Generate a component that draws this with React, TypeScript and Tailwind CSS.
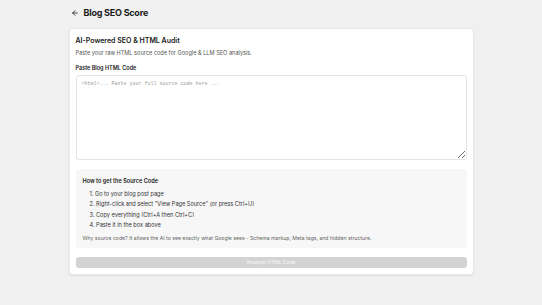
import React from "react";

export default function App() {
  const font = { fontFamily: "Inter, 'Noto Sans', sans-serif" };
  return (
    <div className="min-h-[305px] w-full bg-[#f0f0f0]" style={font}>
      <div className="mx-auto w-[405px]">
        <div className="flex h-[25px] items-center gap-[5px] pl-[2px] pt-[1px]">
          <svg width="8" height="8" viewBox="0 0 24 24" fill="none" stroke="#222" strokeWidth="2.5" strokeLinecap="round" strokeLinejoin="round">
            <path d="M19 12H5" />
            <path d="M12 19l-7-7 7-7" />
          </svg>
          <h1 className="text-[9px] font-bold tracking-tight text-[#1a1a1a]">Blog SEO Score</h1>
        </div>
        <div className="mt-[3px] rounded-[4px] border border-[#e8e8e8] bg-white px-[6px] pb-[6px] pt-[7px] shadow-[0_1px_2px_rgba(0,0,0,0.08)]">
          <h2 className="text-[7px] font-semibold leading-[10px] text-[#1a1a1a]">AI-Powered SEO &amp; HTML Audit</h2>
          <p className="mt-[2px] text-[5.6px] leading-[10px] text-[#555]">Paste your raw HTML source code for Google &amp; LLM SEO analysis.</p>
          <label className="mt-[5px] block text-[5.5px] font-semibold leading-[10px] text-[#1a1a1a]">Paste Blog HTML Code</label>
          <textarea
            className="mt-[2px] block h-[85px] w-full resize-y rounded-[3px] border border-[#e4e4e4] bg-white px-[5px] py-[4px] text-[5px] leading-[8px] text-[#333] outline-none placeholder:text-[#9a9a9a]"
            style={{ fontFamily: "'Liberation Mono', 'DejaVu Sans Mono', monospace" }}
            placeholder="<html>... Paste your full source code here ..."
          />
          <div className="mt-[9px] rounded-[4px] bg-[#f7f7f7] px-[7px] pb-[6px] pt-[7px]">
            <h3 className="text-[5.6px] font-semibold leading-[10px] text-[#1a1a1a]">How to get the Source Code</h3>
            <ol className="mt-[3px] pl-[7px] text-[5.6px] leading-[10.3px] text-[#333]">
              <li>1. Go to your blog post page</li>
              <li>2. Right-click and select "View Page Source" (or press Ctrl+U)</li>
              <li>3. Copy everything (Ctrl+A then Ctrl+C)</li>
              <li>4. Paste it in the box above</li>
            </ol>
            <p className="mt-[4px] text-[5.15px] leading-[8px] text-[#666]">
              Why source code? It allows the AI to see exactly what Google sees - Schema markup, Meta tags, and hidden structure.
            </p>
          </div>
          <button className="mt-[9px] flex h-[11px] w-full items-center justify-center rounded-[3px] bg-[#d3d3d3] text-[5px] font-medium text-[#f4f4f4]">
            Analyze HTML Code
          </button>
        </div>
      </div>
    </div>
  );
}
